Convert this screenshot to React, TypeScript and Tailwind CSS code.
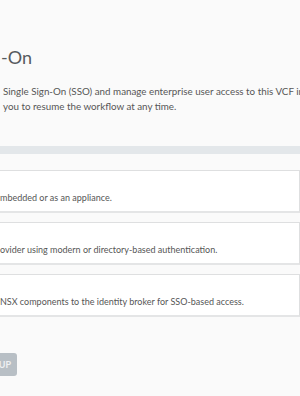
import React from "react";

const steps = [
  "mbedded or as an appliance.",
  "ovider using modern or directory-based authentication.",
  "NSX components to the identity broker for SSO-based access.",
];

export default function App() {
  return (
    <div
      className="w-[300px] h-[396px] overflow-hidden bg-[#fafafa] text-[#565656] flex flex-col"
      style={{ fontFamily: "Lato, 'Liberation Sans', sans-serif" }}
    >
      <h1 className="pt-[45px] pl-[1px] text-[18px] leading-[24px] font-normal text-[#565a5e] whitespace-nowrap">
        -On
      </h1>

      <p className="mt-[15px] pl-[3px] text-[9.8px] leading-[15px] whitespace-nowrap">
        Single Sign-On (SSO) and manage enterprise user access to this VCF instance
        <br />
        you to resume the workflow at any time.
      </p>

      <div className="mt-[32px] h-[8px] w-full bg-[#e3e7ea]" />

      <div className="mt-[16px] flex flex-col gap-[9px]">
        {steps.map((s) => (
          <div
            key={s}
            className="h-[43px] -ml-[4px] border border-b-2 border-[#dedfe0] border-b-[#e4e5e6] bg-white pt-[21px] pl-[3px] text-[9px] leading-[12px] whitespace-nowrap"
          >
            {s}
          </div>
        ))}
      </div>

      <div className="mt-[36px] flex">
        <div className="h-[23px] w-[17px] rounded-r-[3px] bg-[#b8bfc5] flex items-center justify-end pr-[6px] text-[9px] font-bold text-[#eef0f2]">
          UP
        </div>
      </div>
    </div>
  );
}
